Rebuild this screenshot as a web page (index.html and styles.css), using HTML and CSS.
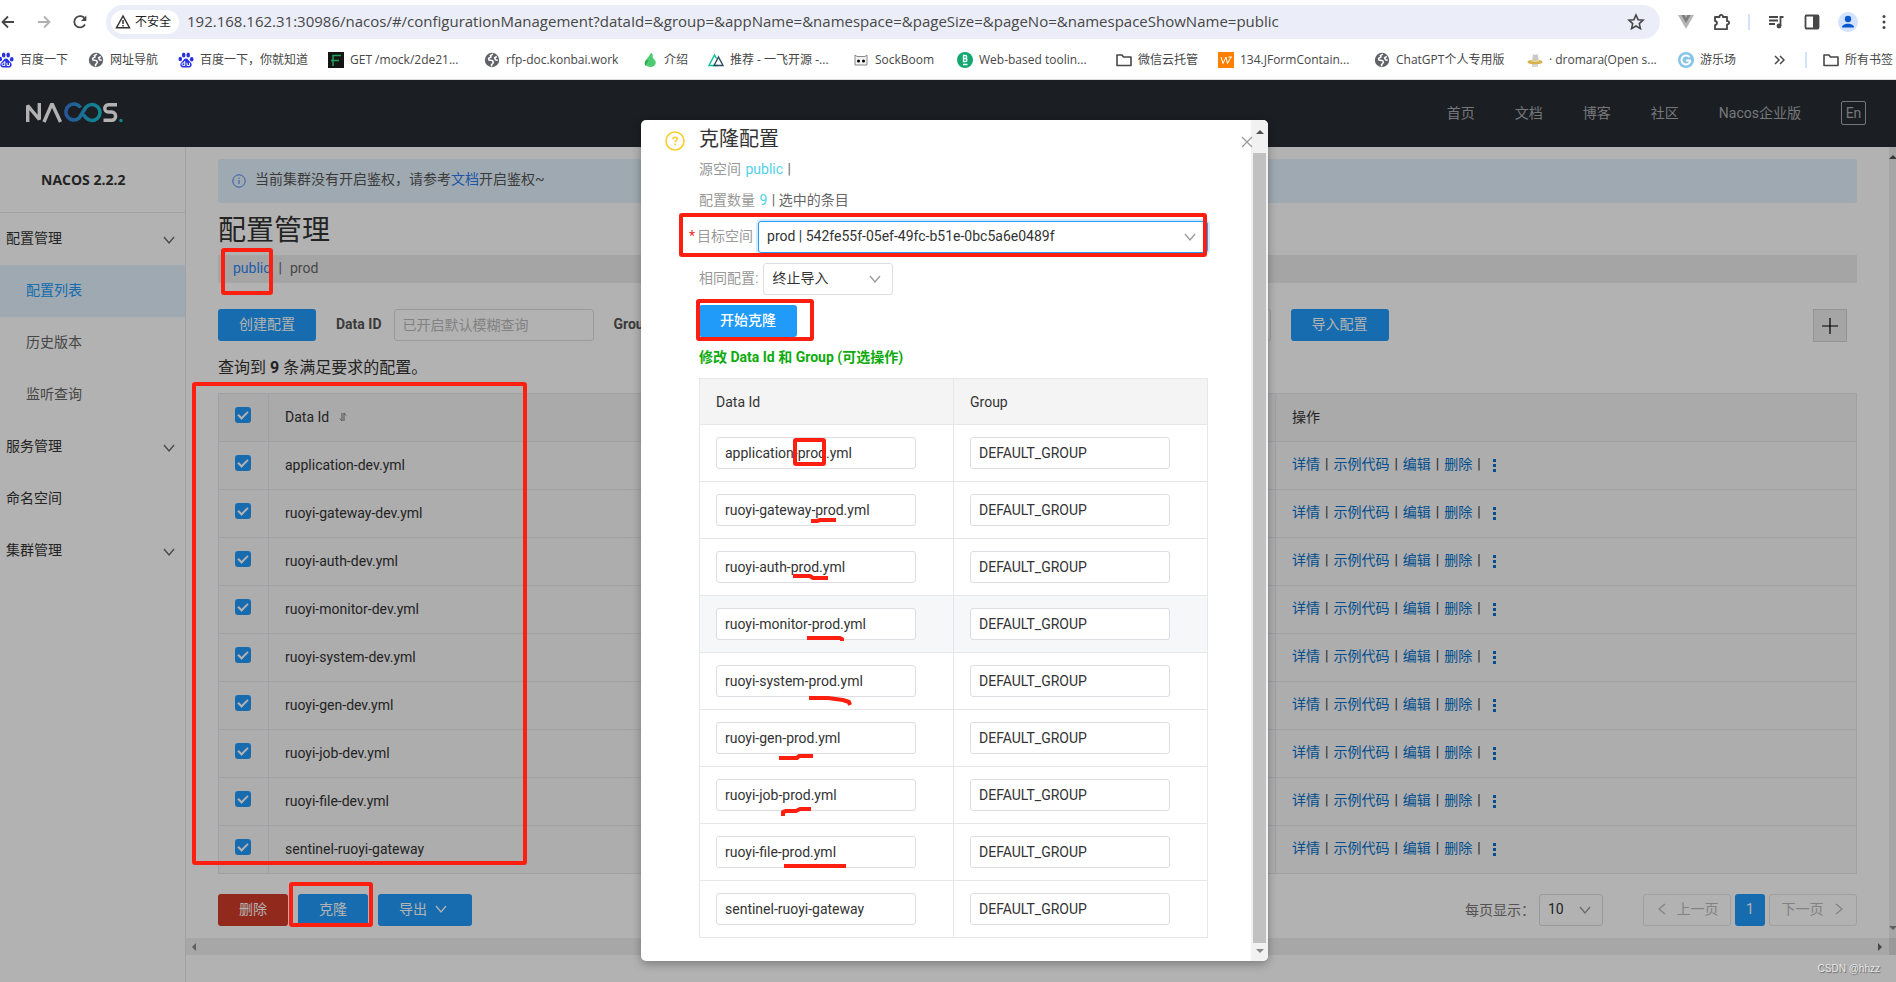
FILE: index.html
```html
<!DOCTYPE html>
<html lang="zh-CN">
<head>
<meta charset="utf-8">
<title>Nacos</title>
<link rel="stylesheet" href="styles.css">
</head>
<body>
<svg class="defs" aria-hidden="true">
  <symbol id="down" viewBox="0 0 12 12"><path d="M1 3l5 6 5-6" fill="none" stroke="currentColor" stroke-width="1.3"/></symbol>
  <symbol id="globe" viewBox="0 0 16 16"><circle cx="8" cy="8" r="7.2" fill="#5f6368"/><path d="M9 2.200l-2.600 1.300 .6 1.500-2.400 1.400 .4 1.600 3.600.6.8 1.800-2 2.600 .4 1.400M12.800 4.500l-2.200 1.300 1 2 2.200.6" fill="none" stroke="#fff" stroke-width="1.500"/></symbol>
  <symbol id="paw" viewBox="0 0 16 16"><g fill="#2932e1"><ellipse cx="2.300" cy="7" rx="1.800" ry="2.300"/><ellipse cx="5.700" cy="3" rx="1.800" ry="2.600"/><ellipse cx="10.200" cy="3" rx="1.800" ry="2.600"/><ellipse cx="13.700" cy="7.200" rx="1.800" ry="2.300"/><path d="M8 6.500c2 0 2.600 2 4 3.300 1.500 1.300 2 2.400 1.500 4-.6 1.900-3 1.900-5.500 1.600-2.500.3-4.900.3-5.500-1.600-.5-1.600 0-2.700 1.500-4C5.400 8.500 6 6.500 8 6.500z"/></g><path d="M6.800 9v4.500H5.300a1.200 1.200 0 010-2.600h1.500M9 10.800v2.700h2.500v-2.700" fill="none" stroke="#fff"/></symbol>
  <symbol id="folder" viewBox="0 0 16 16"><path d="M1 13V3h5l1.500 2H15v8.500H1z" fill="none" stroke="#474747" stroke-width="1.600" stroke-linejoin="round"/></symbol>
</svg>

<header class="browser">
  <div class="toolbar">
    <button class="tool" aria-label="后退"><svg width="16" height="16" viewBox="0 0 16 16"><path d="M14 8H3M8 2.500L2.500 8 8 13.500" fill="none" stroke="#474747" stroke-width="1.800"/></svg></button>
    <button class="tool" aria-label="前进"><svg width="16" height="16" viewBox="0 0 16 16"><path d="M2 8h11M8 2.500L13.500 8 8 13.500" fill="none" stroke="#b0b0b0" stroke-width="1.800"/></svg></button>
    <button class="tool" aria-label="刷新"><svg width="16" height="16" viewBox="0 0 16 16"><path d="M13 10.500A5.700 5.700 0 1113 5" fill="none" stroke="#474747" stroke-width="1.800"/><path d="M14.300 1.500v5.500H9z" fill="#474747"/></svg></button>
    <div class="omnibox">
      <button class="chip"><svg width="16" height="16" viewBox="0 0 16 16"><path d="M8 2L1.500 13.700h13z" fill="none" stroke="#333" stroke-width="1.500"/><path d="M8 6v4M8 11v1.500" stroke="#333" stroke-width="1.500"/></svg>不安全</button>
      <input class="url" aria-label="地址" value="192.168.162.31:30986/nacos/#/configurationManagement?dataId=&amp;group=&amp;appName=&amp;namespace=&amp;pageSize=&amp;pageNo=&amp;namespaceShowName=public">
      <button class="star" aria-label="收藏"><svg width="18" height="18" viewBox="0 0 18 18"><path d="M9 2l2.100 4.700 5 .5-3.800 3.400 1.100 5L9 13l-4.400 2.600 1.100-5L1.900 7.200l5-.5z" fill="none" stroke="#474747" stroke-width="1.600"/></svg></button>
    </div>
    <button class="tool" aria-label="Vue"><svg width="16" height="16" viewBox="0 0 16 16"><path d="M0 1h16L8 15z" fill="#b5b5b5"/><path d="M3.500 1h3L8 4l1.500-3h3L8 9z" fill="#7b7b7b"/></svg></button>
    <button class="tool" aria-label="扩展"><svg width="18" height="18" viewBox="0 0 18 18"><path d="M2 4h4.500V3.500a1.700 1.700 0 013.400 0V4H14v4.200h.5a1.600 1.600 0 010 3.200H14V16.200H2v-4c2.600-.3 2.600-3.900 0-4.200z" fill="none" stroke="#474747" stroke-width="1.800" stroke-linejoin="round"/></svg></button>
    <span class="split"></span>
    <button class="tool" aria-label="媒体"><svg width="18" height="18" viewBox="0 0 18 18"><path d="M2 4h9M2 7.500h9M2 11h6M13.500 13V4h3" fill="none" stroke="#474747" stroke-width="1.800"/><circle cx="12" cy="13" r="2.400" fill="#474747"/></svg></button>
    <button class="tool" aria-label="侧边栏"><svg width="16" height="16" viewBox="0 0 16 16"><rect x="1.500" y="1.500" width="13" height="13" rx="1" fill="none" stroke="#474747" stroke-width="1.800"/><path d="M9 2h5v12H9z" fill="#474747"/></svg></button>
    <button class="tool" aria-label="用户"><svg width="20" height="20" viewBox="0 0 20 20"><circle cx="10" cy="10" r="10" fill="#d3e3fd"/><circle cx="10" cy="7" r="3.200" fill="#0b57d0"/><path d="M4 15.500c0-5 12-5 12 0z" fill="#0b57d0"/></svg></button>
    <button class="tool" aria-label="菜单"><svg width="16" height="16" viewBox="0 0 16 16"><g fill="#474747"><circle cx="8" cy="2.500" r="1.500"/><circle cx="8" cy="8" r="1.500"/><circle cx="8" cy="13.500" r="1.500"/></g></svg></button>
  </div>
  <div class="bookbar">
    <nav class="bookmarks">
      <a href="#"><svg><use href="#paw"/></svg>百度一下</a>
      <a href="#"><svg><use href="#globe"/></svg>网址导航</a>
      <a href="#"><svg><use href="#paw"/></svg>百度一下，你就知道</a>
      <a href="#"><svg viewBox="0 0 16 16"><path d="M0 0h16v16H0z" fill="#151515"/><path d="M5 14V3.500h8M3 8.500h8" fill="none" stroke="#1fa35b" stroke-width="1.500"/></svg>GET /mock/2de21...</a>
      <a href="#"><svg><use href="#globe"/></svg>rfp-doc.konbai.work</a>
      <a href="#"><svg viewBox="0 0 16 16"><path d="M9 1c3 1 1 3 2 5 1.500 2 3.500 3 2.500 6S9 15.500 6 14.500 2 9.500 4.500 7 7 4 9 1z" fill="#4ccb70"/><path d="M3.500 14c-2-3 0-6 3-6z" fill="#2aa650"/></svg>介绍</a>
      <a href="#"><svg viewBox="0 0 16 16"><path d="M10 13.500H1L6.500 3l2 3.500" fill="none" stroke="#00c58e" stroke-width="1.400"/><path d="M6 13.500L10.500 5 15 13.500z" fill="none" stroke="#2f495e" stroke-width="1.400"/></svg>推荐 - 一飞开源 -...</a>
      <a href="#"><svg viewBox="0 0 16 16"><path d="M2 3l2 1.500h8L14 3v10H2z" fill="#f4f4f4" stroke="#888"/><circle cx="5.500" cy="9" r="1.500"/><circle cx="10.500" cy="9" r="1.500"/></svg>SockBoom</a>
      <a href="#"><svg viewBox="0 0 16 16"><circle cx="8" cy="8" r="8" fill="#12a870"/><path d="M6.500 3.500v6h2a1.500 1.500 0 000-3h-2 1.700a1.400 1.400 0 000-3zM6 12.500h4.500" fill="none" stroke="#fff" stroke-width="1.300"/></svg>Web-based toolin...</a>
      <a href="#"><svg><use href="#folder"/></svg>微信云托管</a>
      <a href="#"><svg viewBox="0 0 16 16"><path d="M0 0h16v16H0z" fill="#ff7f00"/><path d="M3 5l2 6.500L8 5l1.500 6.500L13 5M10.500 5H14" fill="none" stroke="#fff"/></svg>134.JFormContain...</a>
      <a href="#"><svg><use href="#globe"/></svg>ChatGPT个人专用版</a>
      <a href="#"><svg viewBox="0 0 16 16"><path d="M5 9l1-7 2 1 2.500-1L12 9z" fill="#c9c9c9"/><path d="M5 11h6v4H5z" fill="#d8d8d8"/><ellipse cx="8" cy="10" rx="7.500" ry="2.300" fill="#d8b04a"/><path d="M4.500 8.500h7.500v1H4.500z" fill="#eee"/></svg>· dromara(Open s...</a>
      <a href="#"><svg viewBox="0 0 16 16"><circle cx="8" cy="8" r="8" fill="#86c5e8"/><path d="M11.500 5.200A4.500 4.500 0 1012 10V8.500H8" fill="none" stroke="#fff" stroke-width="2"/></svg>游乐场</a>
    </nav>
    <button class="more" aria-label="更多书签"><svg width="12" height="12" viewBox="0 0 12 12"><path d="M2 2l4 4-4 4M7 2l4 4-4 4" fill="none" stroke="#474747" stroke-width="1.500"/></svg></button>
    <span class="split"></span>
    <a class="all" href="#"><svg><use href="#folder"/></svg>所有书签</a>
  </div>
</header>

<div class="app">
  <header class="top">
    <svg class="logo" width="98" height="22" viewBox="0 0 98 22" role="img" aria-label="NACOS">
      <defs><linearGradient id="inf" gradientUnits="userSpaceOnUse" x1="37" y1="0" x2="75" y2="0"><stop offset="0" stop-color="#3a78dc"/><stop offset="1" stop-color="#16c4d0"/></linearGradient></defs>
      <g fill="none" stroke="#fff" stroke-width="3.400"><path d="M1.700 20V3.500L13.300 17.500V1" stroke-linejoin="bevel"/><path d="M18 20L25.500 2.700h1L34.500 20"/><path d="M91 2.700h-8.500c-5 0-5 7.300 0 7.300h3c5.500 0 5.500 8.300 0 8.300H77.500"/></g>
      <path d="M54.500 5.500A8 8 0 1 0 53 16.200L60 5.200A8 8 0 1 1 60 15.800L56.500 11.500" fill="none" stroke="url(#inf)" stroke-width="3.600"/>
      <circle cx="95" cy="18.500" r="1.700" fill="#16c4d0"/>
    </svg>
    <nav class="links"><a href="#">首页</a><a href="#">文档</a><a href="#">博客</a><a href="#">社区</a><a href="#">Nacos企业版</a><button class="lang">En</button></nav>
  </header>

  <div class="body">
    <aside class="side">
      <h2>NACOS 2.2.2</h2>
      <nav>
        <a href="#">配置管理<svg><use href="#down"/></svg></a>
        <a href="#" class="sub active">配置列表</a>
        <a href="#" class="sub">历史版本</a>
        <a href="#" class="sub">监听查询</a>
        <a href="#">服务管理<svg><use href="#down"/></svg></a>
        <a href="#">命名空间</a>
        <a href="#">集群管理<svg><use href="#down"/></svg></a>
      </nav>
    </aside>

    <div class="scroller">
      <div class="row">
        <main class="main">
          <div class="alert"><svg width="14" height="14" viewBox="0 0 14 14"><circle cx="7" cy="7" r="6.200" fill="none" stroke="#4d82f0"/><path d="M7 6v4M7 3.700v1.200" stroke="#4d82f0"/></svg><span>当前集群没有开启鉴权，请参考<a href="#">文档</a>开启鉴权~</span></div>
          <h1>配置管理</h1>
          <div class="spaces"><a href="#">public</a><span>|</span><span>prod</span></div>
          <div class="filters">
            <button class="btn">创建配置</button>
            <label for="did">Data ID</label><input id="did" class="field" placeholder="已开启默认模糊查询">
            <label for="grp">Group</label><input id="grp" class="field wide">
            <button class="btn">导入配置</button>
            <button class="plus" aria-label="添加"><svg width="16" height="16" viewBox="0 0 16 16"><path d="M8 0v16M0 8h16" stroke="#000" stroke-width="1.200"/></svg></button>
          </div>
          <p class="count">查询到 <b>9</b> 条满足要求的配置。</p>
          <table class="list">
            <colgroup><col class="c-check"><col><col class="c-ops"></colgroup>
            <tr><th><input type="checkbox" checked aria-label="全选"></th><th>Data Id <svg class="sort" width="8" height="10" viewBox="0 0 8 10"><path d="M3 1v8L1 6.500M5 9V1l2 2.500" fill="none" stroke="#777"/></svg></th><th>操作</th></tr>
            <tr><td><input type="checkbox" checked aria-label="选择"></td><td>application-dev.yml</td><td class="ops"><a href="#">详情</a>|<a href="#">示例代码</a>|<a href="#">编辑</a>|<a href="#">删除</a>|<i></i></td></tr>
            <tr><td><input type="checkbox" checked aria-label="选择"></td><td>ruoyi-gateway-dev.yml</td><td class="ops"><a href="#">详情</a>|<a href="#">示例代码</a>|<a href="#">编辑</a>|<a href="#">删除</a>|<i></i></td></tr>
            <tr><td><input type="checkbox" checked aria-label="选择"></td><td>ruoyi-auth-dev.yml</td><td class="ops"><a href="#">详情</a>|<a href="#">示例代码</a>|<a href="#">编辑</a>|<a href="#">删除</a>|<i></i></td></tr>
            <tr><td><input type="checkbox" checked aria-label="选择"></td><td>ruoyi-monitor-dev.yml</td><td class="ops"><a href="#">详情</a>|<a href="#">示例代码</a>|<a href="#">编辑</a>|<a href="#">删除</a>|<i></i></td></tr>
            <tr><td><input type="checkbox" checked aria-label="选择"></td><td>ruoyi-system-dev.yml</td><td class="ops"><a href="#">详情</a>|<a href="#">示例代码</a>|<a href="#">编辑</a>|<a href="#">删除</a>|<i></i></td></tr>
            <tr><td><input type="checkbox" checked aria-label="选择"></td><td>ruoyi-gen-dev.yml</td><td class="ops"><a href="#">详情</a>|<a href="#">示例代码</a>|<a href="#">编辑</a>|<a href="#">删除</a>|<i></i></td></tr>
            <tr><td><input type="checkbox" checked aria-label="选择"></td><td>ruoyi-job-dev.yml</td><td class="ops"><a href="#">详情</a>|<a href="#">示例代码</a>|<a href="#">编辑</a>|<a href="#">删除</a>|<i></i></td></tr>
            <tr><td><input type="checkbox" checked aria-label="选择"></td><td>ruoyi-file-dev.yml</td><td class="ops"><a href="#">详情</a>|<a href="#">示例代码</a>|<a href="#">编辑</a>|<a href="#">删除</a>|<i></i></td></tr>
            <tr><td><input type="checkbox" checked aria-label="选择"></td><td>sentinel-ruoyi-gateway</td><td class="ops"><a href="#">详情</a>|<a href="#">示例代码</a>|<a href="#">编辑</a>|<a href="#">删除</a>|<i></i></td></tr>
          </table>
          <div class="foot">
            <button class="btn danger">删除</button>
            <button class="btn">克隆</button>
            <button class="btn">导出<svg><use href="#down"/></svg></button>
            <div class="pager">
              <label for="size">每页显示：</label>
              <span class="pick size"><select id="size"><option>10</option></select><svg><use href="#down"/></svg></span>
              <button class="pg" disabled><svg class="left"><use href="#down"/></svg>上一页</button>
              <button class="pg now">1</button>
              <button class="pg" disabled>下一页<svg class="right"><use href="#down"/></svg></button>
            </div>
          </div>
        </main>
        <div class="vbar"><i class="up"></i><i class="dn"></i></div>
      </div>
      <div class="hbar"><i class="lf"></i><i class="rt"></i><span></span></div>
    </div>
  </div>

  <div class="mask">
    <section class="dialog" role="dialog" aria-labelledby="dt">
      <div class="content">
        <svg class="ask" width="20" height="20" viewBox="0 0 20 20"><circle cx="10" cy="10" r="9" fill="none" stroke="#f8cd2b" stroke-width="1.600"/><path d="M8 8.300c0-2.600 4.200-2.600 4.200-.2 0 1.500-2.100 1.600-2.100 3.200M10.100 12.500v1.700" fill="none" stroke="#f8cd2b" stroke-width="1.600"/></svg>
        <div class="form">
          <h3 id="dt">克隆配置</h3>
          <p><span class="dim">源空间</span> <span class="cyan">public</span> |</p>
          <p><span class="dim">配置数量</span> <span class="cyan">9</span> | 选中的条目</p>
          <div class="line need"><label class="dim" for="ns"><em>*</em>目标空间</label><span class="pick target"><select id="ns"><option>prod | 542fe55f-05ef-49fc-b51e-0bc5a6e0489f</option></select><svg><use href="#down"/></svg></span></div>
          <div class="line"><label class="dim" for="same">相同配置:</label><span class="pick same"><select id="same"><option>终止导入</option></select><svg><use href="#down"/></svg></span></div>
          <button class="btn go">开始克隆</button>
          <p class="tip">修改 Data Id 和 Group (可选操作)</p>
          <table class="clone">
            <tr><th>Data Id</th><th>Group</th></tr>
            <tr><td><input class="field" aria-label="Data Id" value="application-prod.yml"></td><td><input class="field" aria-label="Group" value="DEFAULT_GROUP"></td></tr>
            <tr><td><input class="field" aria-label="Data Id" value="ruoyi-gateway-prod.yml"></td><td><input class="field" aria-label="Group" value="DEFAULT_GROUP"></td></tr>
            <tr><td><input class="field" aria-label="Data Id" value="ruoyi-auth-prod.yml"></td><td><input class="field" aria-label="Group" value="DEFAULT_GROUP"></td></tr>
            <tr class="hover"><td><input class="field" aria-label="Data Id" value="ruoyi-monitor-prod.yml"></td><td><input class="field" aria-label="Group" value="DEFAULT_GROUP"></td></tr>
            <tr><td><input class="field" aria-label="Data Id" value="ruoyi-system-prod.yml"></td><td><input class="field" aria-label="Group" value="DEFAULT_GROUP"></td></tr>
            <tr><td><input class="field" aria-label="Data Id" value="ruoyi-gen-prod.yml"></td><td><input class="field" aria-label="Group" value="DEFAULT_GROUP"></td></tr>
            <tr><td><input class="field" aria-label="Data Id" value="ruoyi-job-prod.yml"></td><td><input class="field" aria-label="Group" value="DEFAULT_GROUP"></td></tr>
            <tr><td><input class="field" aria-label="Data Id" value="ruoyi-file-prod.yml"></td><td><input class="field" aria-label="Group" value="DEFAULT_GROUP"></td></tr>
            <tr><td><input class="field" aria-label="Data Id" value="sentinel-ruoyi-gateway"></td><td><input class="field" aria-label="Group" value="DEFAULT_GROUP"></td></tr>
          </table>
        </div>
      </div>
      <div class="dbar"><i class="up"></i><b></b><i class="dn"></i></div>
      <button class="close" aria-label="关闭"><svg width="12" height="12" viewBox="0 0 12 12"><path d="M1 1l10 10M11 1L1 11" stroke="#999" stroke-width="1.200"/></svg></button>
    </section>
  </div>
</div>

<svg class="marks" width="1896" height="982" viewBox="0 0 1896 982" aria-hidden="true">
  <g fill="none" stroke="#ff1f10" stroke-width="4" stroke-linejoin="round">
    <rect x="223" y="250" width="48" height="43" rx="1"/>
    <rect x="194" y="384" width="331" height="479" rx="1"/>
    <rect x="291" y="884" width="80" height="41" rx="1"/>
    <rect x="681" y="215" width="524" height="40" rx="1"/>
    <rect x="698" y="301" width="114" height="38" rx="1"/>
    <rect x="795" y="440" width="29" height="24" rx="1"/>
    <path d="M811 521h6l3-1h16M793 576h17l3 2h15M807 638h33l2 1v2M809 698h19l15 2 6 2 1 3M779 758h18l2-2h14M783 816v-4l3-1h10l4-2h11M784 866h62"/>
  </g>
</svg>
<span class="mark-by">CSDN @hhzz</span>
</body>
</html>
```
FILE: styles.css
```css
* { box-sizing: border-box; }
body {
  margin: 0;
  min-height: 100vh;
  display: flex;
  flex-direction: column;
  position: relative;
  overflow: hidden;
  color: #333;
  background: #fff;
  font: 14px/20px Roboto, "Noto Sans CJK SC", sans-serif;
}
button, input, select { font: inherit; color: inherit; margin: 0; }
button { border: 0; padding: 0; background: none; }
a { color: inherit; text-decoration: none; }
h1, h2, h3, p { margin: 0; font-weight: 400; }
.defs { position: absolute; width: 0; height: 0; }

/* browser chrome */
.browser {
  height: 80px;
  border-bottom: 1px solid #dcdcdc;
  font-family: "Open Sans", "Noto Sans CJK SC", sans-serif;
  color: #474747;
}
.toolbar { display: flex; align-items: center; height: 44px; margin: 0 -6px 0 -10px; }
.tool { flex: 0 0 36px; height: 36px; display: grid; place-items: center; }
.split { flex: 0 0 2px; height: 16px; margin: 0 8px; background: #d3e3fd; }
.omnibox {
  flex: 1;
  display: flex;
  align-items: center;
  height: 34px;
  margin: 0 8px;
  padding: 0 15px 0 5px;
  border-radius: 17px;
  background: #ebeef8;
}
.chip {
  display: flex;
  align-items: center;
  gap: 4px;
  width: 68px;
  height: 24px;
  padding-left: 4px;
  border-radius: 12px;
  background: #fff;
  font-size: 12px;
  color: #222;
  white-space: nowrap;
}
.url { flex: 1; border: 0; background: none; padding: 0 0 2px 8px; font-size: 15px; outline: 0; }
.star { height: 18px; }
.bookbar { display: flex; align-items: center; height: 32px; font-size: 12px; white-space: nowrap; }
.bookmarks {
  flex: 1;
  display: grid;
  grid-template-columns: 90px 90px 150px 156px 158px 66px 145px 104px 159px 102px 156px 153px 151px 90px;
  margin-left: -2px;
}
.bookbar a { display: flex; align-items: center; gap: 6px; }
.bookbar a svg { flex: none; width: 16px; height: 16px; }
.more { display: grid; width: 12px; height: 12px; margin-right: 12px; }
.all { margin: 0 3px 0 8px; }

/* console */
.app { position: relative; flex: 1; display: flex; flex-direction: column; }
.top {
  display: flex;
  align-items: center;
  justify-content: space-between;
  height: 67px;
  padding: 0 30px 2px 26px;
  background: #272b32;
  color: #a8abb0;
}
.links { display: flex; align-items: center; gap: 40px; }
.lang { width: 25px; height: 24px; border: 1px solid #a8abb0; border-radius: 2px; line-height: 20px; }
.body { flex: 1; display: flex; }
.side { flex: 0 0 186px; border-right: 1px solid #e6e7eb; }
.side h2 {
  height: 66px;
  padding-left: 41px;
  border-bottom: 1px solid #e6e7eb;
  font: 700 14px/66px "Open Sans", sans-serif;
}
.side nav a {
  display: flex;
  align-items: center;
  justify-content: space-between;
  height: 52px;
  padding: 0 10px 2px 6px;
}
.side nav svg { width: 12px; height: 12px; margin-top: 4px; color: #666; }
.side nav .sub { padding-left: 26px; color: #666; }
.side nav .active { background: #e4f3fe; color: #209bfa; }
.scroller { flex: 1; min-width: 0; }
.row { display: flex; }
.main { flex: 1; min-width: 0; padding: 12px 32px; }
.alert {
  display: flex;
  align-items: center;
  gap: 9px;
  height: 44px;
  padding: 0 14px 4px;
  border-radius: 3px;
  background: #e4f3fe;
  color: #555;
}
.alert svg { margin-top: 4px; }
.alert a { color: #2f7bef; }
.main h1 { margin: 10px 0 6px; font-size: 28px; line-height: 36px; }
.spaces { display: flex; gap: 8px; height: 28px; padding-left: 15px; background: #ededed; line-height: 26px; color: #666; }
.spaces a { color: #2e86f0; }
.filters { display: flex; align-items: flex-start; margin-top: 26px; line-height: 30px; }
.filters label { margin: 0 12px 0 20px; font-weight: 700; color: #555; }
.btn {
  display: inline-flex;
  align-items: center;
  gap: 8px;
  height: 32px;
  padding: 0 21px 2px;
  border-radius: 3px;
  background: #209bfa;
  color: #fff;
  line-height: 20px;
  white-space: nowrap;
}
.btn svg { width: 12px; height: 12px; margin-right: 4px; }
.field {
  width: 200px;
  height: 32px;
  padding: 0 8px;
  border: 1px solid #dcdee3;
  border-radius: 3px;
  background: #fff;
}
.field::placeholder { color: #bbb; }
.filters .wide { flex: 0 1 607px; margin-right: 20px; }
.plus {
  display: grid;
  place-items: center;
  width: 34px;
  height: 33px;
  margin: 0 10px 0 auto;
  border: 1px solid #d5d5d5;
  background: #ededed;
}
.count { margin: 14px 0 13px; font-size: 16px; line-height: 24px; }
table { width: 100%; table-layout: fixed; border-collapse: collapse; }
th, td { padding: 0 16px; border: 1px solid #e6e7eb; text-align: left; font-weight: 400; }
th { background: #f4f4f4; }
.list td, .list th { height: 48px; padding-bottom: 2px; }
.list td { background: #f8f8f8; }
.c-check { width: 50px; }
.c-ops { width: 581px; }
input[type="checkbox"] {
  appearance: none;
  display: grid;
  place-items: center;
  width: 16px;
  height: 16px;
  margin-bottom: 3px;
  border-radius: 3px;
  background: #209bfa;
}
input[type="checkbox"]::after {
  content: "";
  width: 8px;
  height: 4px;
  margin-bottom: 2px;
  border: solid #fff;
  border-width: 0 0 2px 2px;
  rotate: -45deg;
}
.sort { margin-left: 6px; }
.list .ops { padding-bottom: 4px; }
.ops a { color: #0070cc; margin: 0 5px; }
.ops a:first-child { margin-left: 0; }
.ops i {
  display: inline-block;
  width: 3px;
  height: 14px;
  margin-left: 12px;
  vertical-align: middle;
  background: radial-gradient(circle, #0070cc 60%, transparent 65%) 0 0 / 3px 5px;
}
.foot { display: flex; gap: 10px; margin-top: 20px; }
.danger { background: #d23c2a; }
.pager { display: flex; align-items: center; margin-left: auto; gap: 4px; color: #777; }
.pick { position: relative; display: block; color: #333; }
.pick select {
  appearance: none;
  display: block;
  width: 100%;
  height: 32px;
  padding: 0 8px 2px;
  border: 1px solid #dcdee3;
  border-radius: 3px;
  background: transparent;
}
.pick svg { position: absolute; top: 10px; right: 12px; width: 12px; height: 12px; color: #999; pointer-events: none; }
.pick.size { width: 64px; margin-right: 36px; }
.pg {
  display: flex;
  align-items: center;
  justify-content: center;
  gap: 9px;
  width: 88px;
  height: 32px;
  padding-bottom: 2px;
  border: 1px solid #e4e5e9;
  border-radius: 3px;
  color: #bbb;
}
.pg svg { width: 12px; height: 12px; }
.left { rotate: 90deg; }
.right { rotate: -90deg; }
.pg.now { width: 30px; border: 0; background: #209bfa; color: #fff; }

/* scroll bars */
.vbar, .dbar { display: flex; flex-direction: column; align-items: center; justify-content: space-between; }
.vbar { flex: 0 0 7px; padding: 8px 0; background: #eeeeee; overflow: hidden; }
.hbar { display: flex; align-items: center; height: 17px; padding-left: 6px; background: #efefef; }
.up, .dn, .lf, .rt { width: 0; height: 0; border: 4px solid transparent; }
.up { border-top: 0; border-bottom-color: #505050; }
.dn { border-bottom: 0; border-top-color: #888; }
.lf { border-left: 0; border-right-color: #888; }
.rt { border-right: 0; border-left-color: #666; margin: 0 7px 0 auto; }
.hbar span { width: 7px; height: 17px; background: #dcdcdc; }

/* clone dialog */
.mask {
  position: absolute;
  inset: 0;
  display: flex;
  justify-content: center;
  align-items: flex-start;
  padding: 40px 0 0 13px;
  background: rgba(0, 0, 0, .3);
}
.dialog {
  position: relative;
  display: flex;
  width: 627px;
  border-radius: 5px;
  background: #fff;
  box-shadow: 0 3px 10px rgba(0, 0, 0, .3);
  overflow: hidden;
}
.content { flex: 1; display: flex; gap: 14px; padding: 4px 43px 23px 24px; }
.ask { flex: none; margin-top: 7px; }
.form { flex: 1; display: flex; flex-direction: column; gap: 10px; }
.form h3 { margin-bottom: -5px; font-size: 20px; line-height: 30px; }
.form p { line-height: 21px; color: #666; }
.form .dim { color: #999; }
.form .cyan { color: #50d3e8; margin: 0 1px; }
.line { display: flex; align-items: center; gap: 5px; }
.line label { padding-bottom: 2px; }
.need { margin-left: -10px; }
.need em { color: #f52a1d; font-style: normal; margin-right: 2px; }
.target { flex: 1; }
.target select { border-color: #209bfa; box-shadow: 0 0 0 2px #d3ebfe; }
.same { width: 130px; }
.go { align-self: flex-start; font-weight: 500; }
.form .tip { font-weight: 700; color: #0dab0d; }
.clone th { height: 46px; }
.clone td { height: 57px; }
.hover td { background: #f6f7f9; }
.dbar { width: 17px; padding: 10px 0 8px; background: #f1f1f1; }
.dbar b { flex: 1; width: 13px; margin: 19px 0 6px; background: #c1c1c1; }
.close { position: absolute; top: 16px; right: 15px; width: 12px; height: 12px; display: grid; }

/* hand-drawn marks over the page */
.marks { position: absolute; top: 0; left: 0; pointer-events: none; }
.mark-by {
  position: absolute;
  right: 16px;
  bottom: 5px;
  font: 10px/16px "Liberation Sans", sans-serif;
  color: #e8e8e8;
  text-shadow: 1px 1px 1px #666;
}
```
